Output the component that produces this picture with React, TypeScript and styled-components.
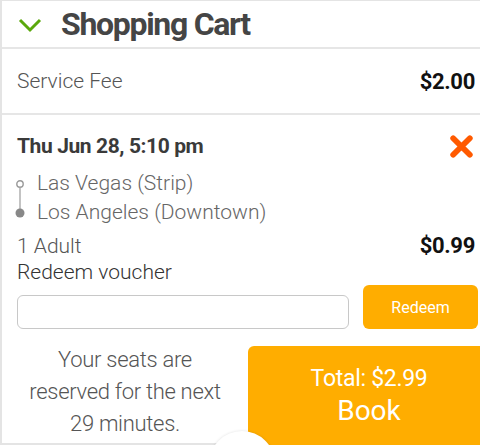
import * as React from "react";
import styled, { createGlobalStyle } from "styled-components";

const GlobalStyle = createGlobalStyle`
  html, body {
    margin: 0;
    padding: 0;
    background: #ffffff;
    overflow: hidden;
  }
  body {
    font-family: Roboto, "Liberation Sans", sans-serif;
  }
`;

const Panel = styled.div`
  position: relative;
  width: 480px;
  height: 445px;
  box-sizing: border-box;
  border-left: 2px solid #e4e4e4;
  border-top: 1px solid #e4e4e4;
  overflow: hidden;
  background: #fff;
`;

const Header = styled.div`
  display: flex;
  align-items: center;
  height: 46px;
  border-bottom: 2px solid #e6e6e6;
  padding-left: 16px;
`;

const Chevron = styled.svg`
  width: 24px;
  height: 16px;
  margin-right: 19px;
  margin-top: 2px;
`;

const Title = styled.h2`
  margin: 0;
  font-size: 32px;
  font-weight: 700;
  color: #454545;
  letter-spacing: -1.3px;
`;

const FeeRow = styled.div`
  display: flex;
  align-items: center;
  justify-content: space-between;
  height: 64px;
  padding: 0 5px 0 15px;
  border-bottom: 2px solid #e6e6e6;
`;

const Label = styled.span<{ $dark?: boolean }>`
  font-size: 21px;
  font-weight: 300;
  color: ${p => (p.$dark ? "#333" : "#555")};
`;

const Price = styled.span`
  font-size: 22px;
  font-weight: 700;
  color: #111;
  letter-spacing: -0.3px;
`;

const Trip = styled.div`
  padding: 16px 5px 0 15px;
`;

const DateRow = styled.div`
  display: flex;
  align-items: center;
  justify-content: space-between;
  height: 30px;
`;

const DateText = styled.span`
  font-size: 21px;
  font-weight: 700;
  color: #3a3a3a;
  letter-spacing: -0.4px;
`;

const RemoveIcon = styled.svg`
  width: 25px;
  height: 25px;
  margin-right: 1px;
`;

const Route = styled.div`
  display: flex;
  margin-top: 8px;
`;

const RouteIcon = styled.svg`
  width: 12px;
  height: 40px;
  margin: 11px 11px 0 -3px;
`;

const Stops = styled.div`
  display: flex;
  flex-direction: column;
`;

const Stop = styled.span`
  font-size: 21px;
  font-weight: 300;
  color: #666;
  line-height: 29px;
`;

const AdultRow = styled.div`
  display: flex;
  align-items: flex-end;
  justify-content: space-between;
  margin-top: 7px;
  height: 24px;
`;

const Voucher = styled.div`
  line-height: 26px;
  margin-top: 1px;
`;

const VoucherRow = styled.div`
  display: flex;
  align-items: center;
  gap: 14px;
  margin-top: -2px;
`;

const VoucherInput = styled.input`
  flex: 1;
  height: 34px;
  box-sizing: border-box;
  border: 1px solid #c8c8c8;
  border-radius: 6px;
  margin-top: 9px;
  outline: none;
`;

const RedeemButton = styled.button`
  width: 115px;
  height: 44px;
  margin-right: -3px;
  border: none;
  border-radius: 6px;
  background: #ffad00;
  color: #fff;
  font-family: Roboto, "Liberation Sans", sans-serif;
  font-size: 16px;
  font-weight: 400;
`;

const Bottom = styled.div`
  display: flex;
  margin-top: 17px;
`;

const Notice = styled.p`
  width: 246px;
  margin: -2px 0 0 0;
  text-align: center;
  font-size: 22px;
  font-weight: 300;
  color: #555;
  line-height: 32px;
  letter-spacing: -0.3px;
`;

const BookButton = styled.button`
  flex: 1;
  height: 100px;
  margin-right: -10px;
  border: none;
  border-radius: 6px 0 0 0;
  background: #ffad00;
  color: #fff;
  font-family: Roboto, "Liberation Sans", sans-serif;
  display: flex;
  flex-direction: column;
  align-items: center;
  padding: 18px 0 0 0;
`;

const Total = styled.span`
  font-size: 23px;
  line-height: 30px;
  letter-spacing: -0.3px;
`;

const Book = styled.span`
  font-size: 28px;
  line-height: 34px;
`;

const ScrollBubble = styled.div`
  position: absolute;
  left: 207px;
  top: 430px;
  width: 66px;
  height: 66px;
  border-radius: 50%;
  background: #fff;
  box-shadow: 0 0 3px rgba(0, 0, 0, 0.12);
`;

const BottomLine = styled.div`
  position: absolute;
  left: 0;
  bottom: 0;
  width: 248px;
  height: 2px;
  background: #e4e4e4;
`;

export default function App() {
  return (
    <>
      <GlobalStyle />
      <Panel>
        <Header>
          <Chevron viewBox="0 0 24 16">
            <polyline points="2,3 12,13 22,3" fill="none" stroke="#5aa80c" strokeWidth="3" />
          </Chevron>
          <Title>Shopping Cart</Title>
        </Header>
        <FeeRow>
          <Label>Service Fee</Label>
          <Price>$2.00</Price>
        </FeeRow>
        <Trip>
          <DateRow>
            <DateText>Thu Jun 28, 5:10 pm</DateText>
            <RemoveIcon viewBox="0 0 24 24">
              <path d="M4 4 L20 20 M20 4 L4 20" stroke="#ff5a00" strokeWidth="5.5" strokeLinecap="round" />
            </RemoveIcon>
          </DateRow>
          <Route>
            <RouteIcon viewBox="0 0 12 40">
              <circle cx="6" cy="4" r="3.2" fill="#fff" stroke="#999" strokeWidth="1.4" />
              <line x1="6" y1="7.5" x2="6" y2="30" stroke="#aaa" strokeWidth="1.4" />
              <circle cx="6" cy="33" r="4.5" fill="#888" />
            </RouteIcon>
            <Stops>
              <Stop>Las Vegas (Strip)</Stop>
              <Stop>Los Angeles (Downtown)</Stop>
            </Stops>
          </Route>
          <AdultRow>
            <Label>1 Adult</Label>
            <Price>$0.99</Price>
          </AdultRow>
          <Voucher>
            <Label $dark>Redeem voucher</Label>
          </Voucher>
          <VoucherRow>
            <VoucherInput />
            <RedeemButton>Redeem</RedeemButton>
          </VoucherRow>
        </Trip>
        <Bottom>
          <Notice>
            Your seats are
            <br />
            reserved for the next
            <br />
            29 minutes.
          </Notice>
          <BookButton>
            <Total>Total: $2.99</Total>
            <Book>Book</Book>
          </BookButton>
        </Bottom>
        <BottomLine />
        <ScrollBubble />
      </Panel>
    </>
  );
}
